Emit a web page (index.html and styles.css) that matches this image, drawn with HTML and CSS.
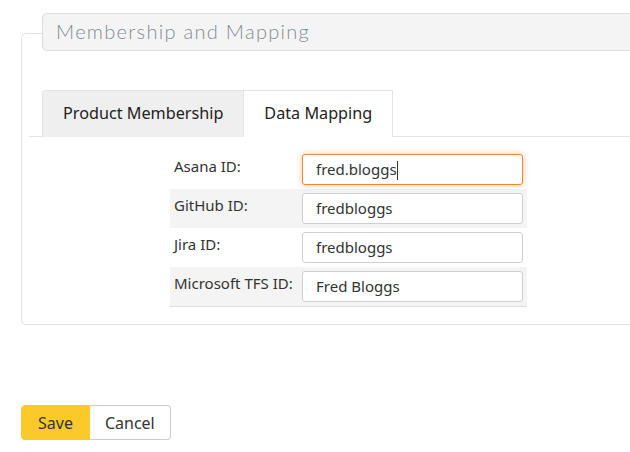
FILE: index.html
```html
<!DOCTYPE html>
<html>
<head>
<meta charset="utf-8">
<link rel="stylesheet" href="styles.css">
</head>
<body>
<div class="page">
  <section class="panel">
    <div class="legend">Membership and Mapping</div>
    <div class="tabs">
      <div class="tab">Product Membership</div>
      <div class="tab active">Data Mapping</div>
    </div>
    <div class="form">
      <div class="row">
        <div class="label">Asana ID:</div>
        <div class="field"><div class="input focus">fred.bloggs<span class="caret"></span></div></div>
      </div>
      <div class="row alt">
        <div class="label">GitHub ID:</div>
        <div class="field"><div class="input">fredbloggs</div></div>
      </div>
      <div class="row">
        <div class="label">Jira ID:</div>
        <div class="field"><div class="input">fredbloggs</div></div>
      </div>
      <div class="row alt last">
        <div class="label">Microsoft TFS ID:</div>
        <div class="field"><div class="input">Fred Bloggs</div></div>
      </div>
    </div>
  </section>
  <div class="buttons">
    <button class="btn save">Save</button>
    <button class="btn cancel">Cancel</button>
  </div>
</div>
</body>
</html>
```
FILE: styles.css
```css
html, body {
  margin: 0;
  padding: 0;
  background: #fff;
}
body {
  font-family: "Noto Sans", "DejaVu Sans", sans-serif;
  color: #333;
  overflow: hidden;
}
.page {
  width: 630px;
  height: 452px;
  padding-top: 33px;
  box-sizing: border-box;
}
.panel {
  margin-left: 21px;
  height: 292px;
  box-sizing: border-box;
  border: 1px solid #e2e2e2;
  border-right: none;
  border-radius: 5px 0 0 5px;
}
.legend {
  margin: -21px 0 0 20px;
  height: 38px;
  box-sizing: border-box;
  background: #f4f4f4;
  border: 1px solid #dcdcdc;
  border-right: none;
  border-radius: 5px 0 0 5px;
  padding-left: 13px;
  font-family: "Lato", "Noto Sans", sans-serif;
  font-weight: 300;
  font-size: 20px;
  letter-spacing: 1.3px;
  line-height: 35px;
  color: #858a90;
}
.tabs {
  display: flex;
  margin: 39px 0 0 7px;
  padding-left: 13px;
  border-bottom: 1px solid #e4e4e4;
  height: 47px;
  box-sizing: border-box;
}
.tab {
  height: 47px;
  box-sizing: border-box;
  padding: 0 20px;
  font-size: 16.2px;
  line-height: 45px;
  color: #222;
  background: #efefef;
  border: 1px solid #e4e4e4;
  border-right: none;
  border-bottom: none;
  border-radius: 4px 0 0 0;
}
.tab.active {
  background: #fff;
  border-right: 1px solid #e4e4e4;
  border-radius: 0;
  margin-bottom: -1px;
}
.form {
  width: 357px;
  margin: 13px 0 0 148px;
  border-bottom: 1px solid #dedede;
}
.row {
  display: flex;
  height: 39px;
}
.row.alt {
  background: #f4f4f4;
}
.label {
  width: 132px;
  padding: 6px 0 0 4px;
  box-sizing: border-box;
  font-size: 15px;
  color: #333;
}
.field {
  padding: 4px 0 0 0;
}
.input {
  width: 221px;
  height: 31px;
  box-sizing: border-box;
  border: 1px solid #cfcfcf;
  border-radius: 3px;
  background: #fff;
  padding-left: 13px;
  font-size: 15px;
  line-height: 29px;
  color: #333;
}
.input.focus {
  border-color: #f6862f;
  box-shadow: 0 0 6px rgba(246, 134, 47, 0.45);
}
.caret {
  display: inline-block;
  width: 1px;
  height: 19px;
  background: #333;
  vertical-align: -5px;
}
.buttons {
  display: flex;
  margin: 80px 0 0 21px;
}
.btn {
  height: 35px;
  box-sizing: border-box;
  font-family: "Noto Sans", sans-serif;
  font-size: 16px;
  color: #333;
  padding: 0 16px;
  margin: 0;
  cursor: pointer;
}
.btn.save {
  background: #fcc92a;
  border: 1px solid #fcc92a;
  border-radius: 4px 0 0 4px;
}
.btn.cancel {
  background: #fff;
  border: 1px solid #cccccc;
  border-left: none;
  border-radius: 0 4px 4px 0;
  padding: 0 15px;
}
```
